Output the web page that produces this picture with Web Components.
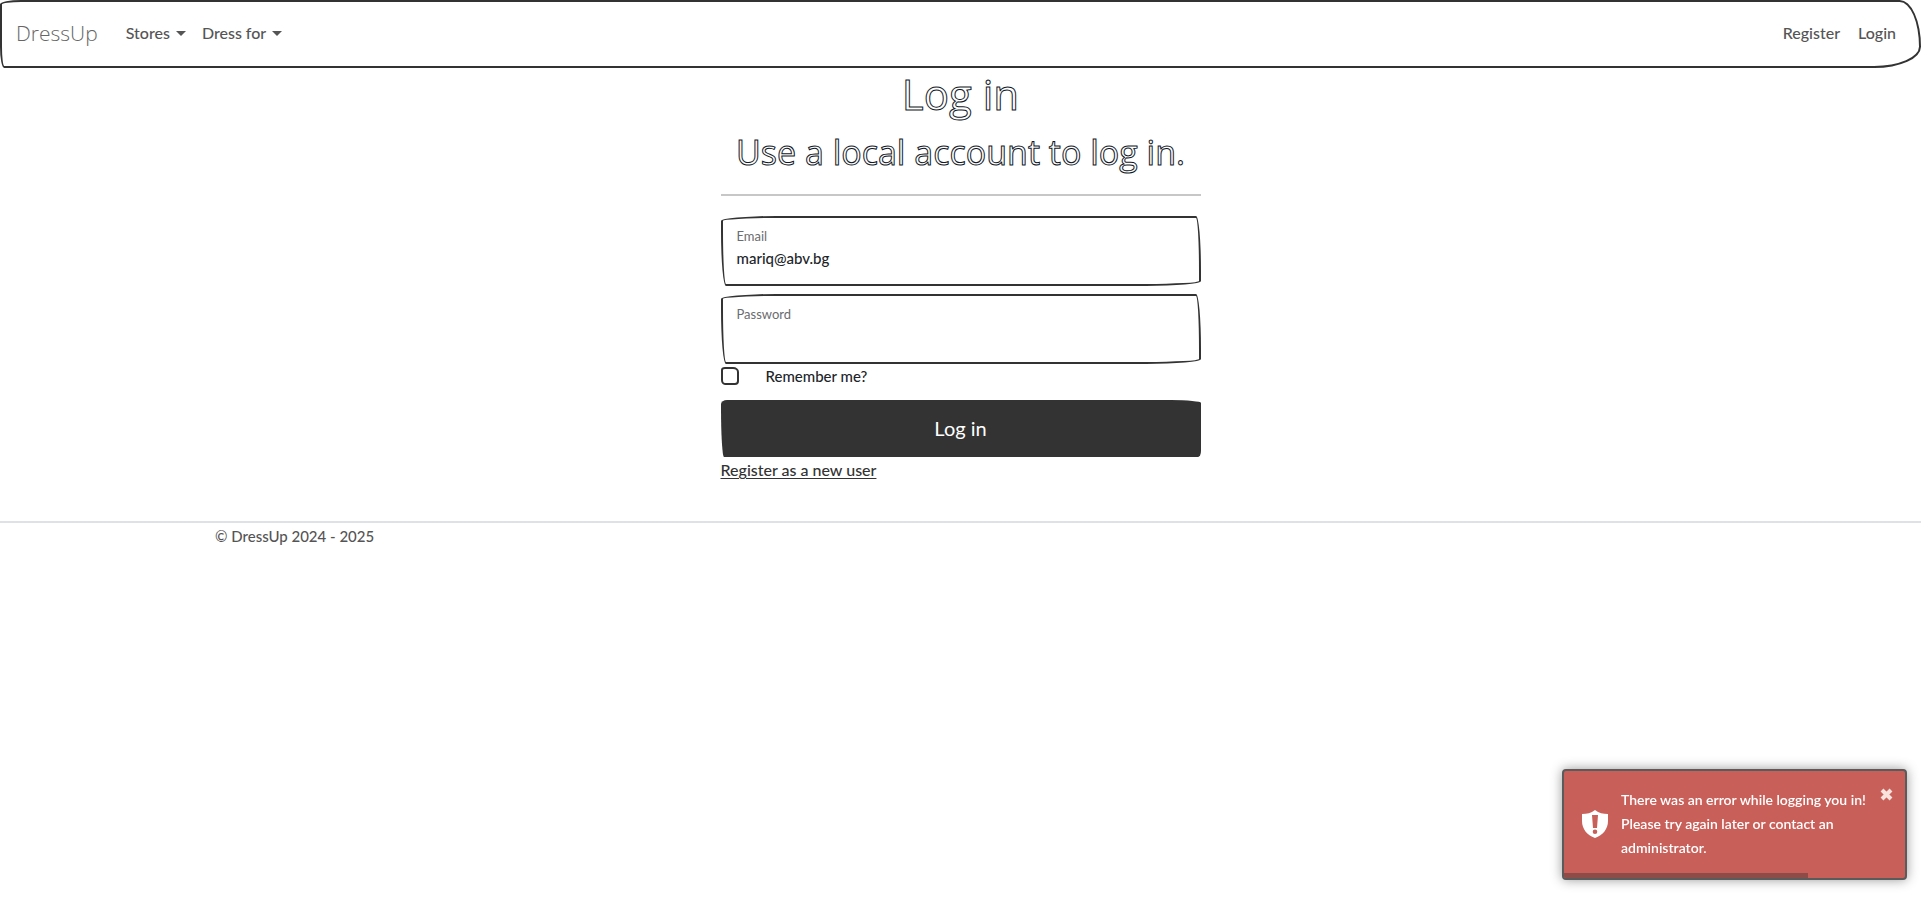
<!DOCTYPE html>
<html lang="en">
<head>
<meta charset="utf-8">
<meta name="viewport" content="width=device-width, initial-scale=1">
<title>Log in - DressUp</title>
<style>
  :root {
    --ink: #333;
    --text: #212529;
    --muted: #555;
    --body-font: Lato, sans-serif;
    --sketch-font: "Open Sans", sans-serif;
  }
  body { margin: 0; background: #fff; color: var(--text); font: 500 16px/24px var(--body-font); }
</style>
</head>
<body>
<dress-navbar>
  <span slot="brand">DressUp</span>
  <nav-item caret>Stores</nav-item>
  <nav-item caret>Dress for</nav-item>
  <nav-item slot="end">Register</nav-item>
  <nav-item slot="end">Login</nav-item>
</dress-navbar>
<login-panel></login-panel>
<page-footer>© DressUp 2024 - 2025</page-footer>
<toast-message>There was an error while logging you in! Please try again later or contact an administrator.</toast-message>

<script>
const define = (name, markup, setup) => customElements.define(name, class extends HTMLElement {
  constructor() {
    super();
    this.attachShadow({ mode: "open" }).innerHTML = markup;
  }
  connectedCallback() { if (setup) setup(this, this.shadowRoot); }
});

define("nav-item", `
<style>
  :host { display: block; }
  a, button { display: flex; align-items: center; gap: 6px; padding: 8px; border: 0; background: none; color: var(--muted);
    font: inherit; text-decoration: none; cursor: pointer; }
  i { border: 5px solid transparent; border-top-color: currentColor; border-bottom: 0; }
</style><slot></slot>`, (host, root) => {
  const control = document.createElement(host.hasAttribute("caret") ? "button" : "a");
  if (host.hasAttribute("caret")) control.type = "button"; else control.href = "#";
  control.append(root.querySelector("slot"));
  if (host.hasAttribute("caret")) control.append(document.createElement("i"));
  root.append(control);
});

define("dress-navbar", `
<style>
  :host { display: block; }
  nav { display: flex; align-items: center; padding: 11px 15px 13px 14px; border: 2px solid var(--ink);
    border-radius: 25px 25px 55px 5px / 5px 55px 25px 25px; }
  .brand { color: #666; font: 300 21px/30px var(--sketch-font); text-decoration: none; margin-right: 20px; }
  .items { display: flex; }
  .end { margin-left: auto; gap: 2px; }
</style>
<nav>
  <a class="brand" href="#"><slot name="brand"></slot></a>
  <div class="items"><slot></slot></div>
  <div class="items end"><slot name="end"></slot></div>
</nav>`);

define("sketch-field", `
<style>
  :host { display: block; }
  div { display: grid; box-sizing: border-box; height: 70px; padding: 8px 14px; align-content: start;
    border: 2px solid var(--ink); border-radius: 55px 5px 55px 5px / 5px 55px 5px 55px; }
  label { font-size: 13px; font-weight: 400; line-height: 20px; color: #6a6c6e; }
  input { width: 100%; height: 24px; padding: 0; border: 0; outline: 0; background: none; color: var(--text);
    font: 500 15px/24px var(--body-font); }
</style>
<div><label for="field"></label><input id="field"></div>`, (host, root) => {
  root.querySelector("label").textContent = host.getAttribute("label");
  const input = root.querySelector("input");
  input.type = host.getAttribute("type");
  input.value = host.getAttribute("value") || "";
});

define("login-panel", `
<style>
  :host { display: block; width: 480px; max-width: 100%; margin: 0 auto; }
  h1, h2 { margin: 0 0 8px; font-family: var(--sketch-font); font-weight: 400; text-align: center;
    -webkit-text-fill-color: #fff; -webkit-text-stroke: 1px #111827; }
  h1 { font-size: 42px; line-height: 48px; padding-top: 2px; }
  h2 { font-size: 34px; line-height: 52px; }
  hr { margin: 16px 0 20px; border: 0; border-top: 2px solid #c7c7c7; }
  form { display: flex; flex-direction: column; }
  sketch-field + sketch-field { margin-top: 8px; }
  .check { display: flex; align-items: center; gap: 27px; margin: 2px 0 14px; font-size: 15px; }
  .check input { appearance: none; box-sizing: border-box; width: 18px; height: 18px; margin: 0; border: 2px solid var(--ink);
    border-radius: 4px 6px 4px 4px / 3px 5px 4px 5px; }
  .check label { line-height: 20px; }
  button { height: 57px; margin: 0 0 1px; padding: 0 0 2px; border: 0; background: var(--ink); color: #fff;
    font: 20px/30px var(--body-font); border-radius: 6px 30px 3px 3px / 4px 3px 6px 50px; }
  a { align-self: flex-start; color: var(--ink); text-underline-offset: 2px; }
</style>
<h1>Log in</h1>
<h2>Use a local account to log in.</h2>
<hr>
<form>
  <sketch-field label="Email" type="email" value="mariq@abv.bg"></sketch-field>
  <sketch-field label="Password" type="password"></sketch-field>
  <div class="check"><input id="remember" type="checkbox"><label for="remember">Remember me?</label></div>
  <button type="button">Log in</button>
  <a href="#">Register as a new user</a>
</form>`);

define("page-footer", `
<style>
  :host { display: block; margin-top: 39px; border-top: 2px solid #dee2e6; color: var(--muted); }
  div { box-sizing: border-box; max-width: 1515px; margin: 0 auto; padding: 1px 12px; font-size: 15px; }
</style>
<footer><div><slot></slot></div></footer>`);

define("toast-message", `
<style>
  :host { position: fixed; right: 14px; bottom: 20px; box-sizing: border-box; width: 345px; border: 2px solid #5b5b5b;
    border-radius: 4px; background: #c95f59; color: #fff; box-shadow: 0 0 12px #999; overflow: hidden; }
  .row { display: flex; align-items: center; gap: 13px; padding: 17px 12px 13px 18px; }
  svg { flex: none; display: block; }
  p { flex: 1; margin: 0; font-size: 14px; font-weight: 600; line-height: 24px; }
  button { align-self: flex-start; padding: 0; border: 0; background: none; }
  .bar { width: 71.5%; height: 5px; background: #8d4c47; }
</style>
<div role="alert">
  <div class="row">
    <svg width="26" height="28" viewBox="0 0 26 28"><path fill="#fff" fill-rule="evenodd" d="M13 0C9 3 5 4 0 4V11C0 19 5 25 13 28C21 25 26 19 26 11V4C21 4 17 3 13 0ZM10 5H16L15 18H11ZM13 19.500A2.300 2.300 0 1 0 13 24.100A2.300 2.300 0 1 0 13 19.500Z"/></svg>
    <p><slot></slot></p>
    <button type="button" aria-label="Close"><svg width="13" height="13" viewBox="0 0 13 13"><path d="M2 2L11 11M11 2L2 11" stroke="#f9e2dc" stroke-width="4"/></svg></button>
  </div>
  <div class="bar"></div>
</div>`);
</script>
</body>
</html>
